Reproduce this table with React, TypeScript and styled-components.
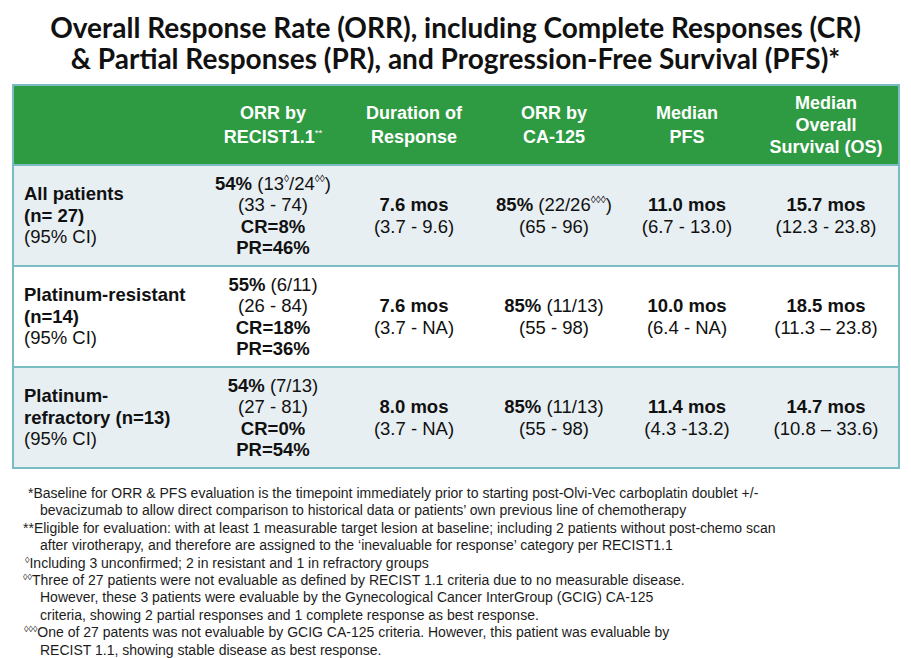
import React from "react";
import styled, { createGlobalStyle } from "styled-components";

const GlobalStyle = createGlobalStyle`
  html, body {
    margin: 0;
    padding: 0;
    background: #ffffff;
  }
  body {
    font-family: "Liberation Sans", Arial, sans-serif;
    color: #111111;
  }
`;

const COLS = "192px 134px 148px 132px 134px 1fr";

const Page = styled.div`
  width: 911px;
  height: 658px;
  overflow: hidden;
  display: flex;
  flex-direction: column;
  align-items: flex-start;
`;

const Title = styled.h1`
  align-self: stretch;
  margin: 0;
  padding-top: 12px;
  font-family: Lato, "Open Sans", sans-serif;
  font-weight: 700;
  font-size: 28px;
  line-height: 31px;
  text-align: center;
  color: #111111;
`;

const Table = styled.div`
  margin: 10px 0 0 12px;
  width: 888px;
  box-sizing: border-box;
  border: 2px solid #79bcc2;
`;

const HeaderRow = styled.div`
  display: grid;
  grid-template-columns: ${COLS};
  height: 78px;
  background: #2e9a42;
  color: #ffffff;
`;

const HeadCell = styled.div<{ $lh?: number }>`
  display: flex;
  flex-direction: column;
  justify-content: center;
  align-items: center;
  text-align: center;
  font-weight: 700;
  font-size: 18px;
  line-height: ${(p) => p.$lh ?? 24}px;
  white-space: nowrap;
`;

const BodyRow = styled.div<{ $shaded?: boolean }>`
  display: grid;
  grid-template-columns: ${COLS};
  height: 99px;
  border-top: 2px solid #79bcc2;
  background: ${(p) => (p.$shaded ? "#e8eff3" : "#ffffff")};
`;

const LabelCell = styled.div`
  display: flex;
  flex-direction: column;
  justify-content: center;
  padding-left: 10px;
  font-size: 18.5px;
  line-height: 21.5px;
  white-space: nowrap;
`;

const DataCell = styled.div`
  display: flex;
  flex-direction: column;
  justify-content: center;
  align-items: center;
  text-align: center;
  font-size: 18.5px;
  line-height: 21.3px;
  white-space: nowrap;
`;

const B = styled.b`
  font-weight: 700;
`;

const Sup = styled.sup`
  font-size: 0.55em;
  line-height: 0;
  vertical-align: 0.75em;
  font-weight: 400;
`;

const Notes = styled.div`
  margin-top: 16px;
  padding-left: 40px;
  font-size: 14px;
  line-height: 17.4px;
  color: #1c1c1c;
`;

const NoteLine = styled.div<{ $lead?: number }>`
  white-space: nowrap;
  margin-left: ${(p) => p.$lead ?? 0}px;
`;

const NoteSup = styled.span`
  font-size: 9px;
  vertical-align: 5px;
  line-height: 0;
`;

type Row = {
  label: React.ReactNode;
  orr: [string, string, string, string, string];
  dur: [string, string];
  ca: [string, string, string];
  pfs: [string, string];
  os: [string, string];
  shaded?: boolean;
};

const rows: Row[] = [
  {
    label: (
      <>
        <B>All patients</B>
        <B>(n= 27)</B>
        <span>(95% CI)</span>
      </>
    ),
    orr: ["54%", "13◊/24◊◊", "(33 - 74)", "CR=8%", "PR=46%"],
    dur: ["7.6 mos", "(3.7 - 9.6)"],
    ca: ["85%", "22/26◊◊◊", "(65 - 96)"],
    pfs: ["11.0 mos", "(6.7 - 13.0)"],
    os: ["15.7 mos", "(12.3 - 23.8)"],
    shaded: true,
  },
  {
    label: (
      <>
        <B>Platinum-resistant</B>
        <B>(n=14)</B>
        <span>(95% CI)</span>
      </>
    ),
    orr: ["55%", "6/11", "(26 - 84)", "CR=18%", "PR=36%"],
    dur: ["7.6 mos", "(3.7 - NA)"],
    ca: ["85%", "11/13", "(55 - 98)"],
    pfs: ["10.0 mos", "(6.4 - NA)"],
    os: ["18.5 mos", "(11.3 – 23.8)"],
  },
  {
    label: (
      <>
        <B>Platinum-</B>
        <B>refractory (n=13)</B>
        <span>(95% CI)</span>
      </>
    ),
    orr: ["54%", "7/13", "(27 - 81)", "CR=0%", "PR=54%"],
    dur: ["8.0 mos", "(3.7 - NA)"],
    ca: ["85%", "11/13", "(55 - 98)"],
    pfs: ["11.4 mos", "(4.3 -13.2)"],
    os: ["14.7 mos", "(10.8 – 33.6)"],
    shaded: true,
  },
];

// split "13◊/24◊◊" so the diamonds become superscripts
const withDiamonds = (s: string) => {
  const parts = s.split(/(◊+)/).filter(Boolean);
  return parts.map((p, i) => (p.startsWith("◊") ? <Sup key={i}>{p}</Sup> : <React.Fragment key={i}>{p}</React.Fragment>));
};

const notes: { marker: string; sup?: boolean; lead: number; lines: string[] }[] = [
  {
    marker: "*",
    lead: -12,
    lines: [
      "Baseline for ORR & PFS evaluation is the timepoint immediately prior to starting post-Olvi-Vec carboplatin doublet +/-",
      "bevacizumab to allow direct comparison to historical data or patients’ own previous line of chemotherapy",
    ],
  },
  {
    marker: "**",
    lead: -17,
    lines: [
      "Eligible for evaluation: with at least 1 measurable target lesion at baseline; including 2 patients without post-chemo scan",
      "after virotherapy, and therefore are assigned to the ‘inevaluable for response’ category per RECIST1.1",
    ],
  },
  {
    marker: "◊",
    sup: true,
    lead: -15,
    lines: ["Including 3 unconfirmed; 2 in resistant and 1 in refractory groups"],
  },
  {
    marker: "◊◊",
    sup: true,
    lead: -17,
    lines: [
      "Three of 27 patients were not evaluable as defined by RECIST 1.1 criteria due to no measurable disease.",
      "However, these 3 patients were evaluable by the Gynecological Cancer InterGroup (GCIG) CA-125",
      "criteria, showing 2 partial responses and 1 complete response as best response.",
    ],
  },
  {
    marker: "◊◊◊",
    sup: true,
    lead: -16,
    lines: [
      "One of 27 patents was not evaluable by GCIG CA-125 criteria. However, this patient was evaluable by",
      "RECIST 1.1, showing stable disease as best response.",
    ],
  },
];

export default function App() {
  return (
    <Page>
      <GlobalStyle />
      <Title>
        Overall Response Rate (ORR), including Complete Responses (CR)
        <br />
        &amp; Partial Responses (PR), and Progression-Free Survival (PFS)*
      </Title>

      <Table>
        <HeaderRow>
          <HeadCell />
          <HeadCell>
            <span>ORR by</span>
            <span>
              RECIST1.1<Sup>**</Sup>
            </span>
          </HeadCell>
          <HeadCell>
            <span>Duration of</span>
            <span>Response</span>
          </HeadCell>
          <HeadCell>
            <span>ORR by</span>
            <span>CA-125</span>
          </HeadCell>
          <HeadCell>
            <span>Median</span>
            <span>PFS</span>
          </HeadCell>
          <HeadCell $lh={22}>
            <span>Median</span>
            <span>Overall</span>
            <span>Survival (OS)</span>
          </HeadCell>
        </HeaderRow>

        {rows.map((r, i) => (
          <BodyRow key={i} $shaded={r.shaded}>
            <LabelCell>{r.label}</LabelCell>
            <DataCell>
              <span>
                <B>{r.orr[0]}</B> ({withDiamonds(r.orr[1])})
              </span>
              <span>{r.orr[2]}</span>
              <B>{r.orr[3]}</B>
              <B>{r.orr[4]}</B>
            </DataCell>
            <DataCell>
              <B>{r.dur[0]}</B>
              <span>{r.dur[1]}</span>
            </DataCell>
            <DataCell>
              <span>
                <B>{r.ca[0]}</B> ({withDiamonds(r.ca[1])})
              </span>
              <span>{r.ca[2]}</span>
            </DataCell>
            <DataCell>
              <B>{r.pfs[0]}</B>
              <span>{r.pfs[1]}</span>
            </DataCell>
            <DataCell>
              <B>{r.os[0]}</B>
              <span>{r.os[1]}</span>
            </DataCell>
          </BodyRow>
        ))}
      </Table>

      <Notes>
        {notes.map((n) =>
          n.lines.map((line, j) => (
            <NoteLine key={n.marker + j} $lead={j === 0 ? n.lead : 0}>
              {j === 0 && (n.sup ? <NoteSup>{n.marker}</NoteSup> : n.marker)}
              {line}
            </NoteLine>
          ))
        )}
      </Notes>
    </Page>
  );
}
